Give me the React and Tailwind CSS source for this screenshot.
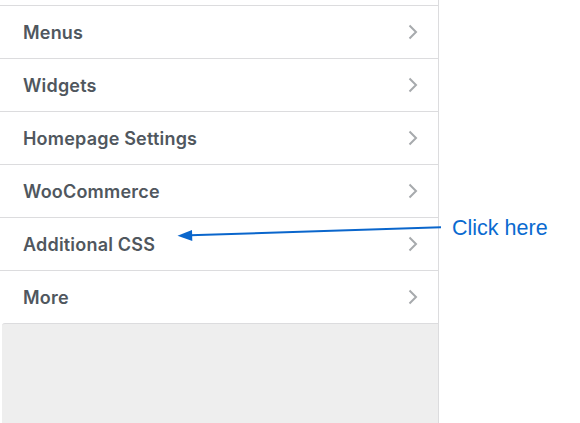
import React from "react";

const items = ["Menus", "Widgets", "Homepage Settings", "WooCommerce", "Additional CSS", "More"];

export default function App() {
  return (
    <div className="relative flex h-[423px] w-[580px] overflow-hidden bg-white">
      <div className="flex w-[439px] flex-col border-r border-[#dcdcde]">
        <div className="h-[5px] bg-white" />
        {items.map((label) => (
          <Row key={label} label={label} />
        ))}
        <div className="flex-1 border-t border-[#dcdcde] bg-[#eeeeee] ml-[2px] rounded-tl-[3px]" />
      </div>

      <div className="flex-1 pl-[13px] pt-[216px]">
        <div
          className="text-[21.5px] leading-[24px] text-[#0a6ad0]"
          style={{ fontFamily: '"Liberation Sans", Arial, sans-serif' }}
        >
          Click here
        </div>
      </div>

      {/* annotation arrow */}
      <svg className="pointer-events-none absolute left-0 top-0" width="580" height="423" viewBox="0 0 580 423">
        <line x1="190" y1="235.3" x2="441" y2="227.3" stroke="#0a66cc" strokeWidth="2" />
        <polygon points="177.5,235.7 192,230 192.3,241" fill="#0a66cc" />
      </svg>
    </div>
  );
}

function Row({ label }) {
  return (
    <div className="flex h-[53px] items-center justify-between border-t border-[#dcdcde] bg-white pl-[23px] pr-[20px] pt-[1px]">
      <span
        className="text-[18px] font-semibold tracking-[0.2px] text-[#50575e]"
        style={{ fontFamily: 'Inter, "Liberation Sans", sans-serif' }}
      >
        {label}
      </span>
      <svg width="10" height="16" viewBox="0 0 10 16" fill="none" className="-mt-[1px]">
        <polyline points="1.5,1.5 8,8 1.5,14.5" stroke="#a7aaad" strokeWidth="2" />
      </svg>
    </div>
  );
}
